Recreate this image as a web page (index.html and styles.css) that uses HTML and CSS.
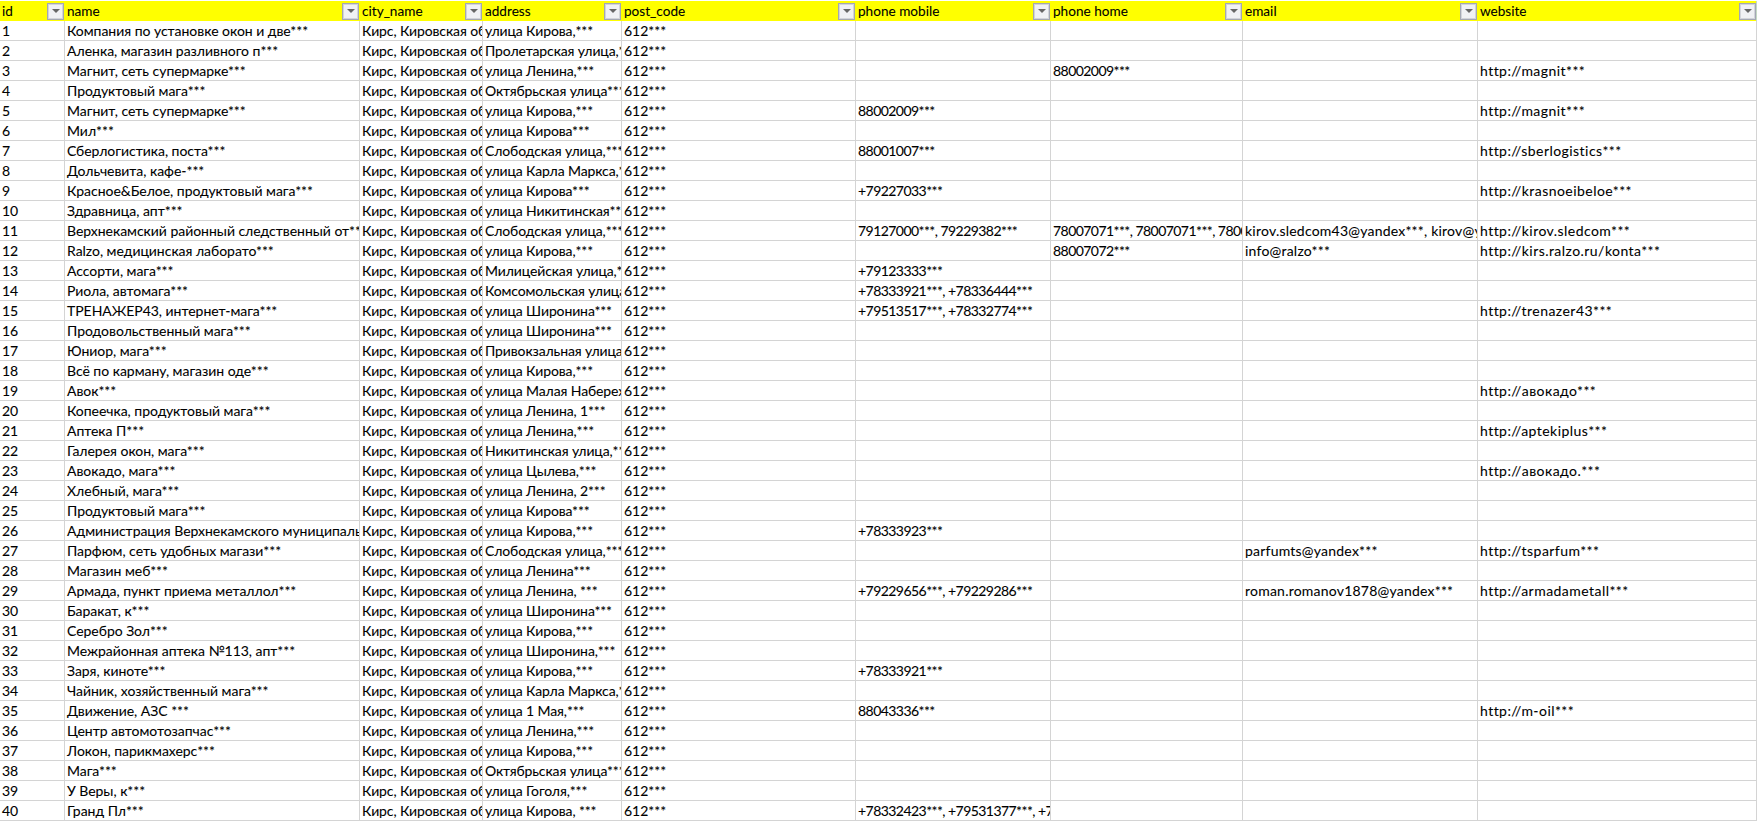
FILE: index.html
```html
<!DOCTYPE html>
<html lang="ru">
<head>
<meta charset="utf-8">
<title>Sheet</title>
<link rel="stylesheet" href="styles.css">
</head>
<body>
<svg class="sprite" width="0" height="0" aria-hidden="true"><symbol id="arrow" viewBox="0 0 8 4"><path d="M0 0H8L4 4Z"/></symbol></svg>
<table class="sheet">
<colgroup>
<col class="c-id"><col class="c-name"><col class="c-city"><col class="c-address"><col class="c-post"><col class="c-mobile"><col class="c-home"><col class="c-email"><col class="c-web">
</colgroup>
<thead>
<tr>
<th><div class="head"><span>id</span><button class="filter"><svg class="arrow"><use href="#arrow"/></svg></button></div></th>
<th><div class="head"><span>name</span><button class="filter"><svg class="arrow"><use href="#arrow"/></svg></button></div></th>
<th><div class="head"><span>city_name</span><button class="filter"><svg class="arrow"><use href="#arrow"/></svg></button></div></th>
<th><div class="head"><span>address</span><button class="filter"><svg class="arrow"><use href="#arrow"/></svg></button></div></th>
<th><div class="head"><span>post_code</span><button class="filter"><svg class="arrow"><use href="#arrow"/></svg></button></div></th>
<th><div class="head"><span>phone mobile</span><button class="filter"><svg class="arrow"><use href="#arrow"/></svg></button></div></th>
<th><div class="head"><span>phone home</span><button class="filter"><svg class="arrow"><use href="#arrow"/></svg></button></div></th>
<th><div class="head"><span>email</span><button class="filter"><svg class="arrow"><use href="#arrow"/></svg></button></div></th>
<th><div class="head"><span>website</span><button class="filter"><svg class="arrow"><use href="#arrow"/></svg></button></div></th>
</tr>
</thead>
<tbody>
<tr><td>1</td><td>Компания по установке окон и две***</td><td>Кирс, Кировская область</td><td>улица Кирова,***</td><td>612***</td><td></td><td></td><td></td><td></td></tr>
<tr><td>2</td><td>Аленка, магазин разливного п***</td><td>Кирс, Кировская область</td><td>Пролетарская улица,***</td><td>612***</td><td></td><td></td><td></td><td></td></tr>
<tr><td>3</td><td>Магнит, сеть супермарке***</td><td>Кирс, Кировская область</td><td>улица Ленина,***</td><td>612***</td><td></td><td>88002009***</td><td></td><td>http://magnit***</td></tr>
<tr><td>4</td><td>Продуктовый мага***</td><td>Кирс, Кировская область</td><td>Октябрьская улица***</td><td>612***</td><td></td><td></td><td></td><td></td></tr>
<tr><td>5</td><td>Магнит, сеть супермарке***</td><td>Кирс, Кировская область</td><td>улица Кирова,***</td><td>612***</td><td>88002009***</td><td></td><td></td><td>http://magnit***</td></tr>
<tr><td>6</td><td>Мил***</td><td>Кирс, Кировская область</td><td>улица Кирова***</td><td>612***</td><td></td><td></td><td></td><td></td></tr>
<tr><td>7</td><td>Сберлогистика, поста***</td><td>Кирс, Кировская область</td><td>Слободская улица,***</td><td>612***</td><td>88001007***</td><td></td><td></td><td>http://sberlogistics***</td></tr>
<tr><td>8</td><td>Дольчевита, кафе-***</td><td>Кирс, Кировская область</td><td>улица Карла Маркса,***</td><td>612***</td><td></td><td></td><td></td><td></td></tr>
<tr><td>9</td><td>Красное&amp;Белое, продуктовый мага***</td><td>Кирс, Кировская область</td><td>улица Кирова***</td><td>612***</td><td>+79227033***</td><td></td><td></td><td>http://krasnoeibeloe***</td></tr>
<tr><td>10</td><td>Здравница, апт***</td><td>Кирс, Кировская область</td><td>улица Никитинская***</td><td>612***</td><td></td><td></td><td></td><td></td></tr>
<tr><td>11</td><td>Верхнекамский районный следственный от***</td><td>Кирс, Кировская область</td><td>Слободская улица,***</td><td>612***</td><td>79127000***, 79229382***</td><td>78007071***, 78007071***, 78007071***</td><td>kirov.sledcom43@yandex***, kirov@yandex***</td><td>http://kirov.sledcom***</td></tr>
<tr><td>12</td><td>Ralzo, медицинская лаборато***</td><td>Кирс, Кировская область</td><td>улица Кирова,***</td><td>612***</td><td></td><td>88007072***</td><td>info@ralzo***</td><td>http://kirs.ralzo.ru/konta***</td></tr>
<tr><td>13</td><td>Ассорти, мага***</td><td>Кирс, Кировская область</td><td>Милицейская улица,***</td><td>612***</td><td>+79123333***</td><td></td><td></td><td></td></tr>
<tr><td>14</td><td>Риола, автомага***</td><td>Кирс, Кировская область</td><td>Комсомольская улица,***</td><td>612***</td><td>+78333921***, +78336444***</td><td></td><td></td><td></td></tr>
<tr><td>15</td><td>ТРЕНАЖЕР43, интернет-мага***</td><td>Кирс, Кировская область</td><td>улица Широнина***</td><td>612***</td><td>+79513517***, +78332774***</td><td></td><td></td><td>http://trenazer43***</td></tr>
<tr><td>16</td><td>Продовольственный мага***</td><td>Кирс, Кировская область</td><td>улица Широнина***</td><td>612***</td><td></td><td></td><td></td><td></td></tr>
<tr><td>17</td><td>Юниор, мага***</td><td>Кирс, Кировская область</td><td>Привокзальная улица,***</td><td>612***</td><td></td><td></td><td></td><td></td></tr>
<tr><td>18</td><td>Всё по карману, магазин оде***</td><td>Кирс, Кировская область</td><td>улица Кирова,***</td><td>612***</td><td></td><td></td><td></td><td></td></tr>
<tr><td>19</td><td>Авок***</td><td>Кирс, Кировская область</td><td>улица Малая Набережная***</td><td>612***</td><td></td><td></td><td></td><td>http://авокадо***</td></tr>
<tr><td>20</td><td>Копеечка, продуктовый мага***</td><td>Кирс, Кировская область</td><td>улица Ленина, 1***</td><td>612***</td><td></td><td></td><td></td><td></td></tr>
<tr><td>21</td><td>Аптека П***</td><td>Кирс, Кировская область</td><td>улица Ленина,***</td><td>612***</td><td></td><td></td><td></td><td>http://aptekiplus***</td></tr>
<tr><td>22</td><td>Галерея окон, мага***</td><td>Кирс, Кировская область</td><td>Никитинская улица,***</td><td>612***</td><td></td><td></td><td></td><td></td></tr>
<tr><td>23</td><td>Авокадо, мага***</td><td>Кирс, Кировская область</td><td>улица Цылева,***</td><td>612***</td><td></td><td></td><td></td><td>http://авокадо.***</td></tr>
<tr><td>24</td><td>Хлебный, мага***</td><td>Кирс, Кировская область</td><td>улица Ленина, 2***</td><td>612***</td><td></td><td></td><td></td><td></td></tr>
<tr><td>25</td><td>Продуктовый мага***</td><td>Кирс, Кировская область</td><td>улица Кирова***</td><td>612***</td><td></td><td></td><td></td><td></td></tr>
<tr><td>26</td><td>Администрация Верхнекамского муниципального округа</td><td>Кирс, Кировская область</td><td>улица Кирова,***</td><td>612***</td><td>+78333923***</td><td></td><td></td><td></td></tr>
<tr><td>27</td><td>Парфюм, сеть удобных магази***</td><td>Кирс, Кировская область</td><td>Слободская улица,***</td><td>612***</td><td></td><td></td><td>parfumts@yandex***</td><td>http://tsparfum***</td></tr>
<tr><td>28</td><td>Магазин меб***</td><td>Кирс, Кировская область</td><td>улица Ленина***</td><td>612***</td><td></td><td></td><td></td><td></td></tr>
<tr><td>29</td><td>Армада, пункт приема металлол***</td><td>Кирс, Кировская область</td><td>улица Ленина, ***</td><td>612***</td><td>+79229656***, +79229286***</td><td></td><td>roman.romanov1878@yandex***</td><td>http://armadametall***</td></tr>
<tr><td>30</td><td>Баракат, к***</td><td>Кирс, Кировская область</td><td>улица Широнина***</td><td>612***</td><td></td><td></td><td></td><td></td></tr>
<tr><td>31</td><td>Серебро Зол***</td><td>Кирс, Кировская область</td><td>улица Кирова,***</td><td>612***</td><td></td><td></td><td></td><td></td></tr>
<tr><td>32</td><td>Межрайонная аптека №113, апт***</td><td>Кирс, Кировская область</td><td>улица Широнина,***</td><td>612***</td><td></td><td></td><td></td><td></td></tr>
<tr><td>33</td><td>Заря, киноте***</td><td>Кирс, Кировская область</td><td>улица Кирова,***</td><td>612***</td><td>+78333921***</td><td></td><td></td><td></td></tr>
<tr><td>34</td><td>Чайник, хозяйственный мага***</td><td>Кирс, Кировская область</td><td>улица Карла Маркса,***</td><td>612***</td><td></td><td></td><td></td><td></td></tr>
<tr><td>35</td><td>Движение, АЗС ***</td><td>Кирс, Кировская область</td><td>улица 1 Мая,***</td><td>612***</td><td>88043336***</td><td></td><td></td><td>http://m-oil***</td></tr>
<tr><td>36</td><td>Центр автомотозапчас***</td><td>Кирс, Кировская область</td><td>улица Ленина,***</td><td>612***</td><td></td><td></td><td></td><td></td></tr>
<tr><td>37</td><td>Локон, парикмахерс***</td><td>Кирс, Кировская область</td><td>улица Кирова,***</td><td>612***</td><td></td><td></td><td></td><td></td></tr>
<tr><td>38</td><td>Мага***</td><td>Кирс, Кировская область</td><td>Октябрьская улица***</td><td>612***</td><td></td><td></td><td></td><td></td></tr>
<tr><td>39</td><td>У Веры, к***</td><td>Кирс, Кировская область</td><td>улица Гоголя,***</td><td>612***</td><td></td><td></td><td></td><td></td></tr>
<tr><td>40</td><td>Гранд Пл***</td><td>Кирс, Кировская область</td><td>улица Кирова, ***</td><td>612***</td><td>+78332423***, +79531377***, +79531377***</td><td></td><td></td><td></td></tr>
</tbody>
</table>
</body>
</html>
```
FILE: styles.css
```css
html, body {
  margin: 0;
  background: #fff;
  overflow: hidden;
}
body {
  padding-top: 1px;
  font-family: "Lato", "Noto Sans", sans-serif;
  font-size: 14px;
  color: #000;
  -webkit-text-stroke: 0.08px #000;
}
.sprite {
  display: block;
  height: 0;
}
.sheet {
  table-layout: fixed;
  border-collapse: separate;
  border-spacing: 0;
  width: 1757px;
}
.c-id { width: 65px; }
.c-name { width: 295px; }
.c-city { width: 123px; }
.c-address { width: 139px; }
.c-post { width: 234px; }
.c-mobile { width: 195px; }
.c-home { width: 192px; }
.c-email { width: 235px; }
.c-web { width: 279px; }
th {
  box-sizing: border-box;
  height: 20px;
  padding: 0;
  background: #ff0;
  font-size: 13.6px;
  font-weight: 400;
  text-align: left;
}
th:last-child {
  border-right: 1px solid #c4d8c4;
}
.head {
  display: flex;
  align-items: center;
  justify-content: space-between;
  height: 20px;
  padding: 0 1px 0 2px;
}
th:last-child .head {
  padding-right: 0;
}
.filter {
  display: flex;
  align-items: center;
  justify-content: center;
  box-sizing: border-box;
  width: 17px;
  height: 17px;
  padding: 0;
  border: 1px solid #a3a7b3;
  background: #f0f1f4;
  box-shadow: inset 0 0 0 1px #d2d4da;
}
.arrow {
  display: block;
  width: 8px;
  height: 4px;
  fill: #666;
}
td {
  box-sizing: border-box;
  height: 20px;
  padding: 0 0 0 2px;
  border-right: 1px solid #d4d4d4;
  border-bottom: 1px solid #d4d4d4;
  white-space: nowrap;
  overflow: hidden;
  line-height: 19px;
}
td:nth-child(2) {
  letter-spacing: -0.03px;
}
td:nth-child(3),
td:nth-child(4) {
  letter-spacing: -0.12px;
}
td:nth-child(6),
td:nth-child(7) {
  letter-spacing: -0.55px;
}
td:nth-child(8) {
  letter-spacing: 0.22px;
}
td:nth-child(9) {
  letter-spacing: 0.45px;
}
```
